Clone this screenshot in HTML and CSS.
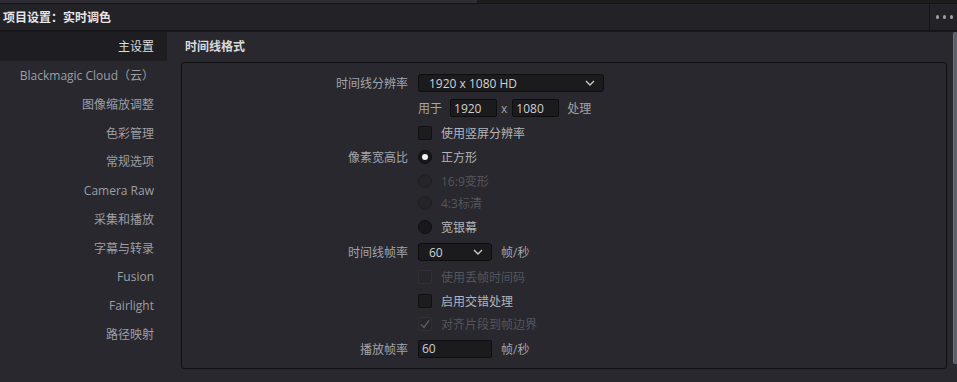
FILE: index.html
```html
<!DOCTYPE html>
<html lang="zh-CN">
<head>
<meta charset="utf-8">
<title>项目设置：实时调色</title>
<link rel="stylesheet" href="styles.css">
</head>
<body>
<div class="top-strip"><div class="ts-left"></div><div class="ts-right"></div></div>
<div class="titlebar">
  <div class="title">项目设置：实时调色</div>
  <div class="title-menu"><span class="dot"></span><span class="dot"></span><span class="dot"></span></div>
</div>
<div class="content">
  <nav class="sidebar">
    <div class="nav-item active">主设置</div>
    <div class="nav-item">Blackmagic Cloud（云）</div>
    <div class="nav-item">图像缩放调整</div>
    <div class="nav-item">色彩管理</div>
    <div class="nav-item">常规选项</div>
    <div class="nav-item">Camera Raw</div>
    <div class="nav-item">采集和播放</div>
    <div class="nav-item">字幕与转录</div>
    <div class="nav-item">Fusion</div>
    <div class="nav-item">Fairlight</div>
    <div class="nav-item">路径映射</div>
  </nav>
  <main class="main">
    <div class="section-title">时间线格式</div>
    <div class="panel">
      <div class="row r1">
        <div class="label">时间线分辨率</div>
        <div class="ctrl">
          <div class="select wide"><span>1920 x 1080 HD</span><svg class="chev" width="10" height="6" viewBox="0 0 10 6"><polyline points="1,1 5,5 9,1" fill="none" stroke="#c9c9cc" stroke-width="1.4"/></svg></div>
        </div>
      </div>
      <div class="row r2">
        <div class="label"></div>
        <div class="ctrl">
          <span class="txt">用于</span>
          <div class="input small">1920</div>
          <span class="txt x">x</span>
          <div class="input small">1080</div>
          <span class="txt after">处理</span>
        </div>
      </div>
      <div class="row r3">
        <div class="label"></div>
        <div class="ctrl"><span class="check"></span><span class="opt">使用竖屏分辨率</span></div>
      </div>
      <div class="row r4">
        <div class="label">像素宽高比</div>
        <div class="ctrl"><span class="radio on"></span><span class="opt">正方形</span></div>
      </div>
      <div class="row r5">
        <div class="label"></div>
        <div class="ctrl"><span class="radio off"></span><span class="opt dis">16:9变形</span></div>
      </div>
      <div class="row r6">
        <div class="label"></div>
        <div class="ctrl"><span class="radio off"></span><span class="opt dis">4:3标清</span></div>
      </div>
      <div class="row r7">
        <div class="label"></div>
        <div class="ctrl"><span class="radio"></span><span class="opt">宽银幕</span></div>
      </div>
      <div class="row r8">
        <div class="label">时间线帧率</div>
        <div class="ctrl">
          <div class="select narrow"><span>60</span><svg class="chev" width="10" height="6" viewBox="0 0 10 6"><polyline points="1,1 5,5 9,1" fill="none" stroke="#c9c9cc" stroke-width="1.4"/></svg></div>
          <span class="txt unit">帧/秒</span>
        </div>
      </div>
      <div class="row r9">
        <div class="label"></div>
        <div class="ctrl"><span class="check off"></span><span class="opt dis">使用丢帧时间码</span></div>
      </div>
      <div class="row r10">
        <div class="label"></div>
        <div class="ctrl"><span class="check"></span><span class="opt">启用交错处理</span></div>
      </div>
      <div class="row r11">
        <div class="label"></div>
        <div class="ctrl"><span class="check off"><svg width="14" height="14" viewBox="0 0 14 14"><polyline points="3,7.5 6,10.5 11,3.5" fill="none" stroke="#5e5f63" stroke-width="1.3"/></svg></span><span class="opt dis">对齐片段到帧边界</span></div>
      </div>
      <div class="row r12">
        <div class="label">播放帧率</div>
        <div class="ctrl">
          <div class="input narrow play">60</div>
          <span class="txt unit">帧/秒</span>
        </div>
      </div>
    </div>
  </main>
  <div class="scroll-track"><div class="scroll-thumb"></div></div>
</div>
</body>
</html>
```

FILE: styles.css
```css
* { box-sizing: border-box; }
html, body { margin: 0; padding: 0; }
body {
  width: 957px;
  height: 382px;
  overflow: hidden;
  background: #28282e;
  font-family: "Open Sans", "Noto Sans CJK SC", sans-serif;
  font-size: 12px;
  color: #a3a5aa;
}

.top-strip {
  display: flex;
  height: 4px;
  border-bottom: 1px solid #141416;
}
.ts-left { width: 477px; background: #2d2d33; }
.ts-right { flex: 1; background: #1c1d1b; }

.titlebar {
  display: flex;
  align-items: stretch;
  height: 28px;
  background: #222227;
  border-bottom: 2px solid #17171a;
}
.title {
  flex: 1;
  display: flex;
  align-items: center;
  padding-left: 3px;
  color: #e6e6e8;
  font-weight: 700;
  font-size: 12px;
}
.title-menu {
  width: 28px;
  border-left: 1px solid #151517;
  display: flex;
  align-items: center;
  justify-content: center;
  gap: 3.5px;
  padding-left: 2px;
}
.dot {
  width: 3.5px;
  height: 3.5px;
  border-radius: 50%;
  background: #9c9ca0;
}

.content {
  display: flex;
  height: 350px;
}

.sidebar {
  width: 167px;
  flex: none;
}
.nav-item {
  height: 28.75px;
  display: flex;
  align-items: center;
  justify-content: flex-end;
  padding-right: 13px;
  color: #9d9fa4;
}
.nav-item.active {
  background: #1e1e22;
  color: #dcdcde;
}

.main {
  flex: 1;
  padding-left: 14px;
  padding-right: 5px;
}
.section-title {
  height: 28px;
  display: flex;
  align-items: center;
  padding-left: 4px;
  color: #dadadc;
  font-weight: 700;
  margin-bottom: 2px;
}
.panel {
  border: 1px solid #101012;
  border-radius: 3px;
  padding: 8px 0 7px 0;
}

.row {
  display: flex;
  align-items: center;
}
.r1 { height: 24px; }
.r2 { height: 26px; }
.r3 { height: 24px; }
.r4 { height: 24px; }
.r5 { height: 23px; }
.r6 { height: 22px; }
.r7 { height: 25px; }
.r8 { height: 26px; }
.r9 { height: 24px; }
.r10 { height: 23px; }
.r11 { height: 24px; }
.r12 { height: 25px; }

.label {
  width: 226px;
  flex: none;
  text-align: right;
  color: #a2a5aa;
}
.ctrl {
  margin-left: 10px;
  display: flex;
  align-items: center;
}

.select {
  height: 18px;
  background: #1b1b1e;
  border: 1px solid #0e0e10;
  border-radius: 3px;
  display: flex;
  align-items: center;
  justify-content: space-between;
  padding: 0 8px 0 10px;
  color: #d2d2d4;
}
.select.wide { width: 186px; }
.select.narrow { width: 74px; padding-right: 8px; }
.chev { display: block; }

.input {
  height: 18px;
  background: #1b1b1e;
  border: 1px solid #0e0e10;
  border-radius: 2px;
  display: flex;
  align-items: center;
  padding-left: 3px;
  color: #cfcfd2;
}
.input.small { width: 47px; }
.input.narrow { width: 74px; }

.txt { color: #a2a5aa; }
.r2 .txt:first-child { margin-right: 8px; }
.txt.x { margin: 0 5px 0 4px; }
.txt.after { margin-left: 8px; }
.txt.unit { margin-left: 9px; }

.check {
  width: 14px;
  height: 14px;
  flex: none;
  background: #1c1c1f;
  border: 1px solid #111113;
  border-radius: 2px;
  position: relative;
}
.check.off {
  background: #26262b;
  border-color: #303036;
}
.check svg { position: absolute; left: -1px; top: -1px; }

.radio {
  width: 14px;
  height: 14px;
  flex: none;
  border-radius: 50%;
  background: #19191c;
  border: 1px solid #0f0f11;
  display: flex;
  align-items: center;
  justify-content: center;
}
.radio.on::after {
  content: "";
  width: 6px;
  height: 6px;
  border-radius: 50%;
  background: #f2f2f2;
}
.radio.off {
  background: #252529;
  border-color: #1f1f23;
}

.opt {
  margin-left: 9px;
  color: #b3b5ba;
}
.opt.dis { color: #55565b; }

.scroll-track {
  width: 5px;
  flex: none;
  padding-left: 1px;
}
.scroll-thumb {
  height: 332px;
  background: #5b5f66;
  border-left: 1px solid #6b6f76;
  border-radius: 2px 0 0 2px;
}
```
